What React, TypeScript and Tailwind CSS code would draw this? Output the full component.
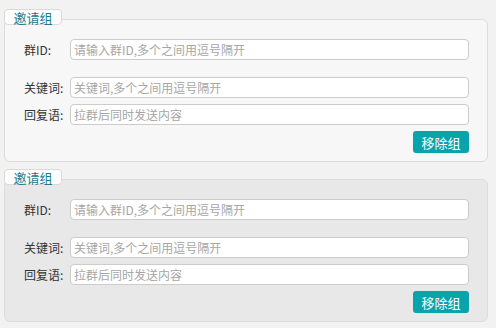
const font = { fontFamily: '"Noto Sans CJK SC", "Noto Sans", sans-serif' };

const Group: React.FC<{ bg: string; top: string }> = ({ bg, top }) => {
  return (
    <div className={top}>
      <div className="relative z-10 -mb-[6px] flex h-4 w-[58px] items-center justify-center rounded-[4px] border border-[#d9d9d9] bg-white text-[13px] leading-none text-[#1d7b8b]">
        邀请组
      </div>
      <div className={`${bg} flex h-[143px] flex-col rounded-[6px] border border-[#dcdcdc] pl-[19px] pr-[18px] pt-[19px] text-[12px] text-[#333]`}>
        <div className="flex h-[21px] items-center">
          <label className="w-[46px] shrink-0">群ID:</label>
          <input
            className="h-[21px] flex-1 rounded-[4px] border border-[#cccccc] bg-white px-[3px] text-[12px] outline-none placeholder:text-[#a6a6a6]"
            placeholder="请输入群ID,多个之间用逗号隔开"
          />
        </div>
        <div className="mt-[17px] flex h-[21px] items-center">
          <label className="w-[46px] shrink-0">关键词:</label>
          <input
            className="h-[21px] flex-1 rounded-[4px] border border-[#cccccc] bg-white px-[3px] text-[12px] outline-none placeholder:text-[#a6a6a6]"
            placeholder="关键词,多个之间用逗号隔开"
          />
        </div>
        <div className="mt-[6px] flex h-[21px] items-center">
          <label className="w-[46px] shrink-0">回复语:</label>
          <input
            className="h-[21px] flex-1 rounded-[4px] border border-[#cccccc] bg-white px-[3px] text-[12px] outline-none placeholder:text-[#a6a6a6]"
            placeholder="拉群后同时发送内容"
          />
        </div>
        <div className="mt-[6px] flex justify-end">
          <button className="h-[22px] w-[56px] rounded-[3px] bg-[#0aa3ad] text-[13px] leading-none text-white">
            移除组
          </button>
        </div>
      </div>
    </div>
  );
};

export default function App() {
  return (
    <div className="h-[328px] w-[496px] bg-[#f2f2f2] pl-1 pr-2" style={font}>
      <Group bg="bg-[#f7f7f7]" top="pt-[9px]" />
      <Group bg="bg-[#e8e8e8]" top="pt-[7px]" />
    </div>
  );
}
